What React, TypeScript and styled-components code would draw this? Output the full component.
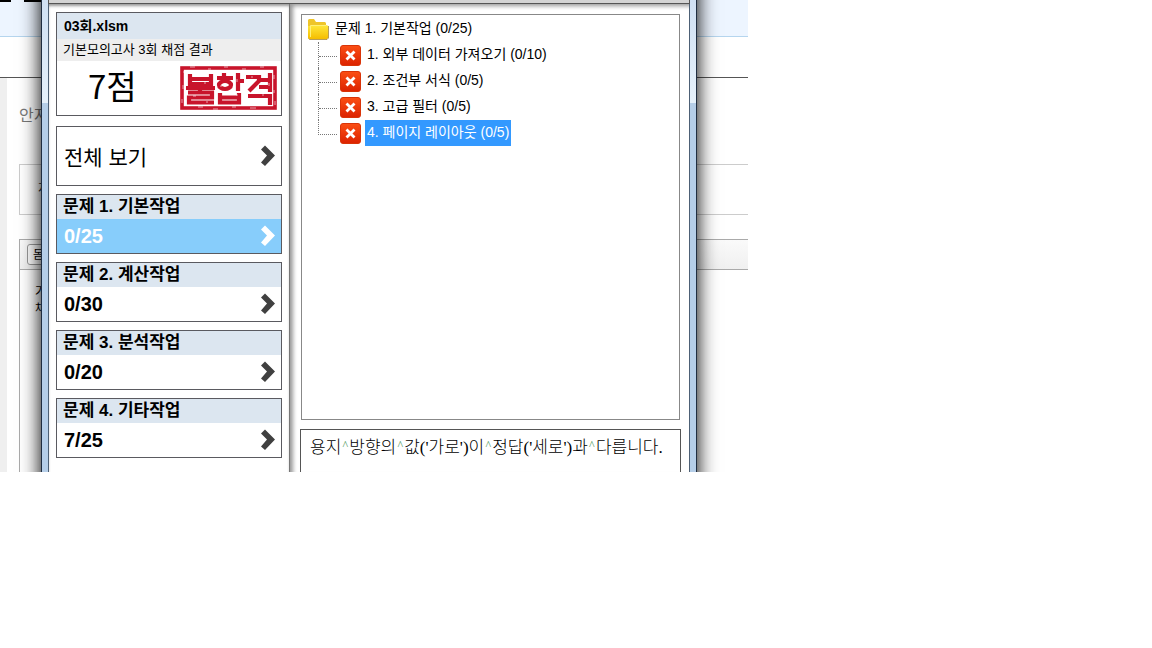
import React, { useState } from "react";
import styled, { createGlobalStyle } from "styled-components";

const GlobalStyle = createGlobalStyle`
  *, *::before, *::after { box-sizing: border-box; }
  body {
    margin: 0;
    background: #fff;
    color: #000;
    font-family: "Liberation Sans", "Noto Sans CJK KR", sans-serif;
  }
  button { font: inherit; color: inherit; }
`;

const Stage = styled.div`
  display: grid;
  grid-template-columns: minmax(0, 1fr);
  width: 100%;
  max-width: 748px;
  overflow: hidden;
  isolation: isolate;

  & > * { grid-area: 1 / 1; }
`;

/* Web page behind the result window */

const BackPage = styled.div`
  display: flex;
  flex-direction: column;
  z-index: -2;
`;

const Banner = styled.div`
  height: 37px;
  background: #edf5ff;
  border-bottom: 1px solid #b5d5ee;
`;

const BannerArt = styled.svg`
  display: block;
`;

const NavBar = styled.div`
  height: 41px;
  border-bottom: 1px solid #555;
`;

const BackBody = styled.div`
  flex: 1;
  display: flex;
  flex-direction: column;
  padding: 25px 0 0 12px;
  border-left: 7px solid #efefef;
`;

const Greeting = styled.p`
  margin: 0 0 36px;
  font-size: 16px;
  line-height: 25px;
  color: #777;
`;

const FieldBox = styled.div`
  height: 51px;
  margin-bottom: 24px;
  padding-left: 18px;
  border: 1px solid #ccc;
  border-right: 0;
  font-size: 12px;
  line-height: 49px;
  color: #333;
`;

const EditorBar = styled.div`
  display: flex;
  align-items: center;
  height: 31px;
  padding-left: 7px;
  border: 1px solid #aaa;
  border-right: 0;
  background: linear-gradient(#fafafa, #f0f0f0);
`;

const FontButton = styled.button`
  height: 21px;
  width: 60px;
  padding: 0 5px;
  border: 1px solid #999;
  border-radius: 3px;
  background: #fff;
  font-size: 12px;
  line-height: 18px;
  text-align: left;
`;

const EditorText = styled.p`
  flex: 1;
  margin: 0;
  padding: 14px 0 0 15px;
  border-left: 1px solid #aaa;
  font-size: 12px;
  line-height: 17px;
`;

/* Result window */

const Window = styled.main`
  display: flex;
  flex-direction: column;
  position: relative;
  min-width: 0;
  margin: 0 51px 0 41px;
  border: solid #1f2d40;
  border-width: 0 1px;
  padding: 0 6px;
  background: linear-gradient(#cfe0f3, #e6f1fb 103px, #b5cee8 103px);

  /* drop shadow runs past both ends so it does not fade at the corners */
  &::before {
    content: "";
    position: absolute;
    inset: -40px 0;
    z-index: -1;
    box-shadow: 0 0 18px 2px rgba(0, 0, 0, 0.95);
  }
`;

const TitleStrip = styled.div`
  height: 4px;
  background: #d4d4d4;
  border: 1px solid #555;
  border-width: 0 1px 1px;
`;

const Panes = styled.div`
  flex: 1;
  display: grid;
  grid-template-columns: minmax(120px, 240px) minmax(0, 1fr);
  border: solid #4d6075;
  border-width: 0 1px;
  background: #fff;
`;

const Sidebar = styled.nav`
  display: flex;
  flex-direction: column;
  gap: 8px;
  padding: 8px 7px 14px 7px;
  box-shadow: inset 0 3px 3px -1px #999;
`;

const ScoreCard = styled.section`
  margin-bottom: 2px;
  border: 1px solid #5a5a60;
`;

const FileName = styled.h1`
  margin: 0;
  padding-left: 7px;
  background: #dce6f0;
  font-size: 14px;
  line-height: 26px;
`;

const ExamName = styled.p`
  margin: 0;
  padding-left: 6px;
  background: #eee;
  font-size: 13px;
  line-height: 22px;
  white-space: nowrap;
`;

const ScoreRow = styled.div`
  display: flex;
  align-items: center;
  justify-content: space-between;
  height: 54px;
  padding: 0 3px 0 31px;
`;

const Points = styled.strong`
  font: 33px/48px "Noto Sans CJK KR", sans-serif;
  height: 54px;
`;

const SectionButton = styled.button`
  display: flex;
  flex-direction: column;
  width: 100%;
  height: 60px;
  padding: 0;
  border: 1px solid #5a5a60;
  background: #fff;
  text-align: left;
  cursor: pointer;
`;

const SectionName = styled.span`
  padding-left: 6px;
  background: #dce6f0;
  font-size: 17px;
  font-weight: 700;
  line-height: 24px;
  white-space: nowrap;
`;

const SectionScore = styled.span<{ $active?: boolean; $plain?: boolean }>`
  flex: 1;
  display: flex;
  align-items: center;
  justify-content: space-between;
  padding: 0 6px 0 7px;
  background: ${(p) => (p.$active ? "#87cdfb" : "#fff")};
  color: ${(p) => (p.$active ? "#fff" : "#000")};
  font-size: ${(p) => (p.$plain ? 21 : 20)}px;
  font-weight: ${(p) => (p.$plain ? 400 : 700)};

  svg { color: ${(p) => (p.$active ? "#fff" : "#404040")}; }
`;

const Detail = styled.div`
  display: flex;
  flex-direction: column;
  gap: 9px;
  min-width: 0;
  padding: 10px 8px 0 10px;
  border-left: 1px solid #777;
  box-shadow: inset 4px 3px 4px -1px #999;
`;

const TreePanel = styled.section`
  height: 406px;
  margin: 0 1px;
  padding: 1px 0 0 6px;
  border: 1px solid #888;
`;

const TreeRoot = styled.div`
  display: flex;
  align-items: center;
  gap: 4px;
  height: 26px;
`;

const TreeList = styled.ul`
  margin: 0 0 0 10px;
  padding: 0;
  list-style: none;
`;

const TreeItem = styled.li`
  display: flex;
  align-items: center;
  height: 26px;

  &::before {
    content: "";
    align-self: flex-start;
    width: 19px;
    height: 15px;
    margin-right: 3px;
    border: dotted #777;
    border-width: 0 0 1px 1px;
  }

  &:not(:last-child) {
    border-left: 1px dotted #777;
  }

  &:not(:last-child)::before {
    border-left: 0;
    width: 18px;
  }
`;

const TreeLabel = styled.button<{ $selected?: boolean }>`
  margin-left: 4px;
  padding: 0 2px 2px;
  border: 0;
  background: ${(p) => (p.$selected ? "#3399ff" : "transparent")};
  color: ${(p) => (p.$selected ? "#fff" : "#000")};
  font-size: 14px;
  line-height: 24px;
  white-space: nowrap;
  cursor: pointer;
`;

const RootLabel = styled(TreeLabel)`
  margin-left: 0;
`;

const Message = styled.section`
  min-height: 43px;
  padding: 5px 9px 0;
  border: solid #555;
  border-width: 1px 1px 0;
  font: 17px/26px "Liberation Serif", "Noto Sans CJK KR", serif;
  font-weight: 300;
`;

const SpaceMark = styled.span`
  display: inline-block;
  width: 8px;
  font-size: 12px;
  line-height: 12px;
  vertical-align: 4px;
  text-align: center;
  color: #4f9a5c;
`;

const Chevron = () => (
  <svg width="14" height="22" viewBox="0 0 14 22" aria-hidden="true">
    <path d="M0 4.500 4 .5 14 10.500 4 21 0 17.500 6 10.500Z" fill="currentColor" />
  </svg>
);

const FolderIcon = () => (
  <svg width="21" height="22" viewBox="0 0 21 22" aria-hidden="true">
    <defs>
      <linearGradient id="folder" x1="0" y1="0" x2="0" y2="1">
        <stop offset="0" stopColor="#ffe83c" />
        <stop offset="1" stopColor="#f5bd00" />
      </linearGradient>
    </defs>
    <path d="M0 2 1 1H6L8 4H17L18 5V20H0Z" fill="#efc52a" />
    <path d="M2 8 3 7H19L20 8V20L19 21H1L0 20V8Z" fill="url(#folder)" />
    <path d="M.5 20.500 1.500 21.500H19L20.500 20V8" fill="none" stroke="#a58433" strokeOpacity=".8" />
    <path d="M2.500 19V7.500H18.500" fill="none" stroke="#fff07a" />
  </svg>
);

const WrongIcon = () => (
  <svg width="21" height="21" viewBox="0 0 21 21" aria-hidden="true">
    <defs>
      <linearGradient id="wrong" x1="0" y1="0" x2="0" y2="1">
        <stop offset="0" stopColor="#fb4f14" />
        <stop offset="1" stopColor="#dc2200" />
      </linearGradient>
    </defs>
    <rect x=".5" y=".5" width="20" height="20" rx="2.500" fill="url(#wrong)" stroke="#d93408" />
    <path d="M6.500 6.500 14.500 14.500M14.500 6.500 6.500 14.500" stroke="#fff" strokeWidth="2.800" />
  </svg>
);

const FailStamp = () => (
  <svg width="98" height="44" viewBox="0 0 98 44" role="img" aria-label="불합격">
    <g fill="none" stroke="#c8142b">
      <rect x="2" y="2" width="93" height="40" strokeWidth="3.600" />
      <g strokeWidth="4.200">
        <path d="M10 8V18H31V8M10 13H31M6 22H35M20 22V26M8 26.500H32V31.500H9V36.500H34" />
        <path d="M44 7V11M37 12H53M58 7V25M58 15H64M40 27V36.500H59V27M40 31.500H59" />
        <ellipse cx="45" cy="19" rx="6" ry="4" />
        <path d="M66 11H79V15L69 25M79 14H90M79 21H90M90 7V26M68 30H90V39" />
      </g>
    </g>
    <path
      d="M3 6H5M10 1H15M28 3H31M44 1H48M62 3H66M80 1H84M94 9V13M94 24V27M95 35V39M70 42H76M52 41H56M33 43H38M18 41H23M2 33V37M3 19V23M12 9H14M24 17H26M13 30H16M26 36H28M41 19V21M57 28V30M57 13V16M71 11H73M89 17V20M82 29H84"
      stroke="#fff"
      strokeOpacity=".6"
      strokeWidth="1"
    />
  </svg>
);

const sections = [
  { name: "문제 1. 기본작업", score: "0/25" },
  { name: "문제 2. 계산작업", score: "0/30" },
  { name: "문제 3. 분석작업", score: "0/20" },
  { name: "문제 4. 기타작업", score: "7/25" },
];

const tasks = [
  "1. 외부 데이터 가져오기 (0/10)",
  "2. 조건부 서식 (0/5)",
  "3. 고급 필터 (0/5)",
  "4. 페이지 레이아웃 (0/5)",
];

const message = ["용지", "방향의", "값('가로')이", "정답('세로')과", "다릅니다."];

export default function App() {
  const [section, setSection] = useState(0);
  const [task, setTask] = useState(3);

  return (
    <>
      <GlobalStyle />
      <Stage>
        <BackPage>
          <Banner>
            <BannerArt width="41" height="2" viewBox="0 0 41 2" aria-hidden="true">
              <path d="M0 0H11V2H0ZM24 0H41V2H24Z" fill="#000" />
            </BannerArt>
          </Banner>
          <NavBar />
          <BackBody>
            <Greeting>안지</Greeting>
            <FieldBox>지</FieldBox>
            <EditorBar>
              <FontButton type="button">돋</FontButton>
            </EditorBar>
            <EditorText>
              가<br />채
            </EditorText>
          </BackBody>
        </BackPage>

        <Window>
          <TitleStrip />
          <Panes>
            <Sidebar>
              <ScoreCard>
                <FileName>03회.xlsm</FileName>
                <ExamName>기본모의고사 3회 채점 결과</ExamName>
                <ScoreRow>
                  <Points>7점</Points>
                  <FailStamp />
                </ScoreRow>
              </ScoreCard>
              <SectionButton type="button" onClick={() => setSection(-1)}>
                <SectionScore $plain>
                  전체 보기
                  <Chevron />
                </SectionScore>
              </SectionButton>
              {sections.map((s, i) => (
                <SectionButton key={s.name} type="button" onClick={() => setSection(i)}>
                  <SectionName>{s.name}</SectionName>
                  <SectionScore $active={i === section}>
                    {s.score}
                    <Chevron />
                  </SectionScore>
                </SectionButton>
              ))}
            </Sidebar>
            <Detail>
              <TreePanel>
                <TreeRoot>
                  <FolderIcon />
                  <RootLabel type="button">문제 1. 기본작업 (0/25)</RootLabel>
                </TreeRoot>
                <TreeList>
                  {tasks.map((t, i) => (
                    <TreeItem key={t}>
                      <WrongIcon />
                      <TreeLabel type="button" $selected={i === task} onClick={() => setTask(i)}>
                        {t}
                      </TreeLabel>
                    </TreeItem>
                  ))}
                </TreeList>
              </TreePanel>
              <Message>
                {message.map((word, i) => (
                  <React.Fragment key={word}>
                    {i > 0 && <SpaceMark>^</SpaceMark>}
                    {word}
                  </React.Fragment>
                ))}
              </Message>
            </Detail>
          </Panes>
        </Window>
      </Stage>
    </>
  );
}
